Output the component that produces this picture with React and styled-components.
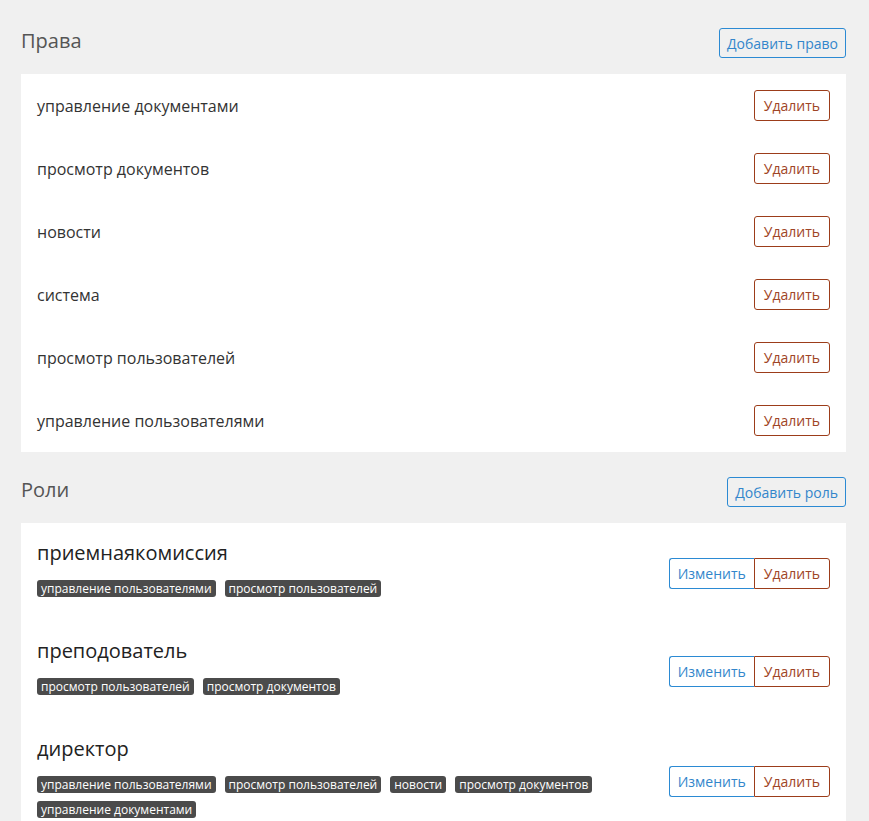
import React from 'react';
import styled, { createGlobalStyle } from 'styled-components';

const GlobalStyle = createGlobalStyle`
  body {
    margin: 0;
    background: #f0f0f0;
    font-family: "Open Sans", "Noto Sans", sans-serif;
    color: #333;
  }
`;

const Page = styled.div`
  padding: 28px 23px 0 21px;
`;

const Section = styled.section`
  & + & {
    margin-top: 25px;
  }
`;

const SectionHeader = styled.div`
  display: flex;
  align-items: center;
  justify-content: space-between;
  margin-bottom: 16px;
`;

const Title = styled.h2`
  margin: 0 0 5px;
  font-size: 20px;
  line-height: 22px;
  font-weight: 400;
  color: #555;
`;

const Button = styled.button`
  height: 31px;
  padding: 0 ${(p) => (p.danger ? 9 : 8)}px;
  font-family: inherit;
  font-size: 14px;
  background: #fff;
  border: 1px solid ${(p) => (p.danger ? '#9c3d1a' : '#2b8ad3')};
  color: ${(p) => (p.danger ? '#9f4526' : '#3386cb')};
  border-radius: 3px;
  cursor: pointer;
`;

const AddButton = styled(Button)`
  height: 30px;
  padding: 0 7px;
  background: #f0f0f0;
`;

const Card = styled.div`
  background: #fff;
`;

const Row = styled.div`
  display: flex;
  align-items: center;
  justify-content: space-between;
  height: 63px;
  padding: 0 16px;
  font-size: 16px;
`;

const Group = styled.div`
  display: flex;
  margin-top: 10px;
  & > button:first-child:not(:last-child) {
    border-radius: 3px 0 0 3px;
    border-right: none;
  }
  & > button:last-child:not(:first-child) {
    border-radius: 0 3px 3px 0;
  }
`;

const RoleItem = styled.div`
  display: flex;
  align-items: center;
  justify-content: space-between;
  padding: 16px 16px 24px;
`;

const RoleName = styled.div`
  font-size: 20px;
  line-height: 28px;
  color: #222;
`;

const Tags = styled.div`
  display: flex;
  flex-wrap: wrap;
  gap: 8px 9px;
  margin-top: 13px;
  max-width: 600px;
`;

const Tag = styled.span`
  background: #4b4b4b;
  color: #fff;
  font-size: 12px;
  line-height: 17px;
  padding: 0 4px;
  border-radius: 3px;
`;

const rights = [
  'управление документами',
  'просмотр документов',
  'новости',
  'система',
  'просмотр пользователей',
  'управление пользователями',
];

const roles = [
  { name: 'приемнаякомиссия', tags: ['управление пользователями', 'просмотр пользователей'] },
  { name: 'преподователь', tags: ['просмотр пользователей', 'просмотр документов'] },
  {
    name: 'директор',
    tags: [
      'управление пользователями',
      'просмотр пользователей',
      'новости',
      'просмотр документов',
      'управление документами',
    ],
  },
];

const App = () => {
  return (
    <Page>
      <GlobalStyle />
      <Section>
        <SectionHeader>
          <Title>Права</Title>
          <AddButton>Добавить право</AddButton>
        </SectionHeader>
        <Card>
          {rights.map((r) => (
            <Row key={r}>
              <span>{r}</span>
              <Button danger>Удалить</Button>
            </Row>
          ))}
        </Card>
      </Section>
      <Section>
        <SectionHeader>
          <Title>Роли</Title>
          <AddButton>Добавить роль</AddButton>
        </SectionHeader>
        <Card>
          {roles.map((role) => (
            <RoleItem key={role.name}>
              <div>
                <RoleName>{role.name}</RoleName>
                <Tags>
                  {role.tags.map((t) => (
                    <Tag key={t}>{t}</Tag>
                  ))}
                </Tags>
              </div>
              <Group>
                <Button>Изменить</Button>
                <Button danger>Удалить</Button>
              </Group>
            </RoleItem>
          ))}
        </Card>
      </Section>
    </Page>
  );
};

export default App;
